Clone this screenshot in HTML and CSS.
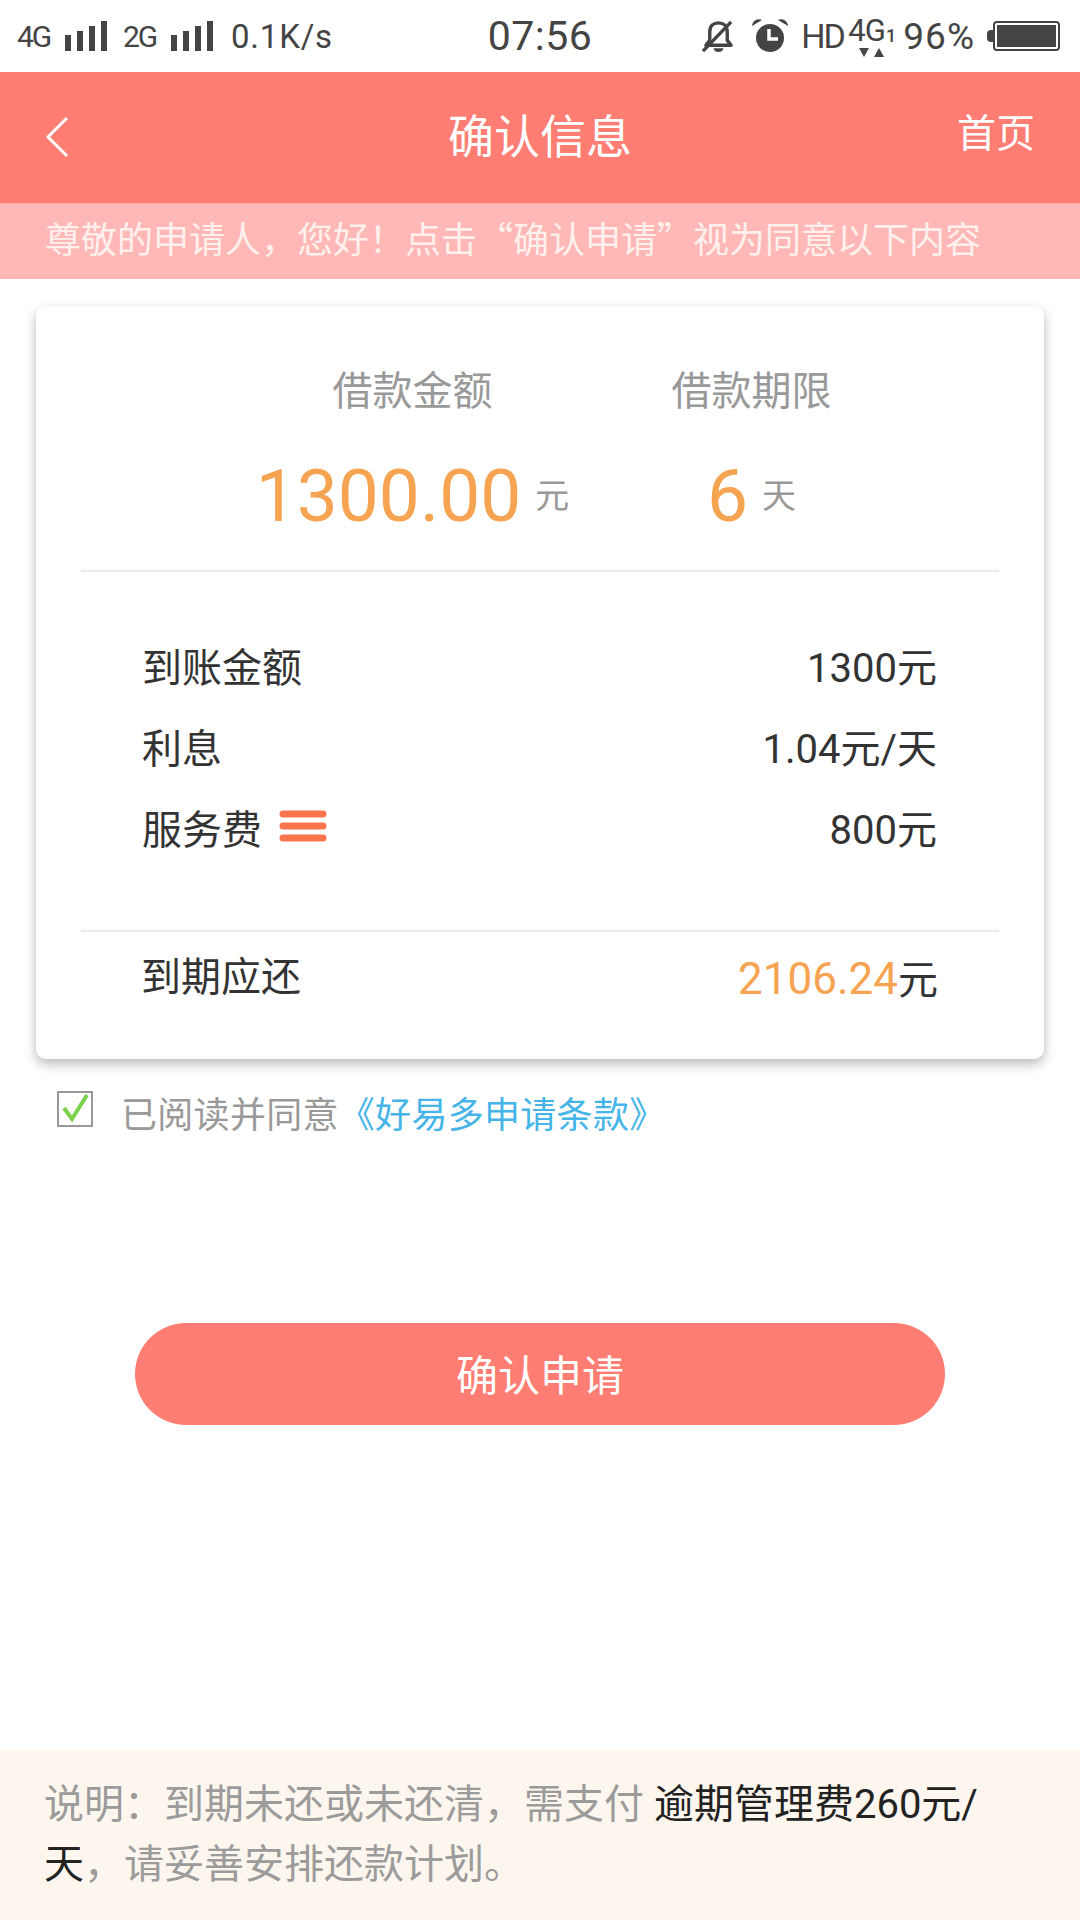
FILE: index.html
```html
<!DOCTYPE html>
<html lang="zh-CN">
<head>
<meta charset="utf-8">
<title>确认信息</title>
<link rel="stylesheet" href="styles.css">
</head>
<body>
<div class="page">
  <div class="status">
    <div class="st-left">
      <span class="net">4G</span>
      <svg class="bars" viewBox="0 0 42 30"><path d="M0 14h6v16H0zM12 10h6v20h-6zM24 5h6v25h-6zM36 0h6v30h-6z"/></svg>
      <span class="net">2G</span>
      <svg class="bars" viewBox="0 0 42 30"><path d="M0 14h6v16H0zM12 10h6v20h-6zM24 5h6v25h-6zM36 0h6v30h-6z"/></svg>
      <span class="speed">0.1K/s</span>
    </div>
    <div class="st-time">07:56</div>
    <div class="st-right">
      <svg class="ic-bell" viewBox="0 0 36 36"><path d="M5 27l4-5V13C9 7 13 4 18 4s9 3 9 9v9l4 5z" fill="none" stroke="#444" stroke-width="3.500" stroke-linejoin="round"/><path d="M13 30h10a5 4 0 0 1-10 0z" fill="#444"/><path d="M2 33L31 3" stroke="#444" stroke-width="3.500"/></svg>
      <svg class="ic-alarm" viewBox="0 0 36 36"><circle cx="18" cy="20" r="14" fill="#444"/><path d="M17 11v10h9" fill="none" stroke="#fff" stroke-width="3.500"/><path d="M0 8a7 7 0 0 1 10-6zM36 8a7 7 0 0 0-10-6z" fill="#444"/></svg>
      <span class="hd">HD</span>
      <span class="sig"><span class="sig-4g">4G</span><span class="sig-1">1</span><svg class="sig-arrows" viewBox="0 0 26 9"><path d="M0 0h10L5 9zM15 9h10L20 0z"/></svg></span>
      <span class="pct">96%</span>
      <span class="bat"><span class="bat-cap"></span><span class="bat-body"><span class="bat-fill"></span></span></span>
    </div>
  </div>

  <header class="head">
    <svg class="back" viewBox="0 0 24 42"><path d="M22 2L3 21l19 19" fill="none" stroke="#fff" stroke-width="3"/></svg>
    <h1 class="title">确认信息</h1>
    <span class="home">首页</span>
  </header>
  <div class="notice">尊敬的申请人，您好！点击“确认申请”视为同意以下内容</div>

  <section class="card">
    <div class="summary">
      <div class="sum-col">
        <div class="sum-label">借款金额</div>
        <div class="sum-val"><span class="big">1300.00</span><span class="unit">元</span></div>
      </div>
      <div class="sum-col">
        <div class="sum-label">借款期限</div>
        <div class="sum-val"><span class="big">6</span><span class="unit">天</span></div>
      </div>
    </div>
    <div class="rows">
      <div class="row"><span>到账金额</span><span>1300元</span></div>
      <div class="row"><span>利息</span><span>1.04元/天</span></div>
      <div class="row"><span class="fee">服务费<svg class="menu" viewBox="0 0 48 32"><path d="M4 4h40M4 16h40M4 28h40" stroke="#f8754e" stroke-width="7" stroke-linecap="round"/></svg></span><span>800元</span></div>
    </div>
    <div class="total"><span class="total-label">到期应还</span><span><span class="orange">2106.24</span>元</span></div>
  </section>

  <div class="agree">
    <svg class="check" viewBox="0 0 36 36"><rect x="1" y="1" width="34" height="34" fill="#fff" stroke="#999" stroke-width="2"/><path d="M7 17l8 11L30 4" fill="none" stroke="#79d24a" stroke-width="4"/></svg>
    <span class="agree-text">已阅读并同意<a class="link">《好易多申请条款》</a></span>
  </div>

  <div class="btn-wrap"><button class="btn">确认申请</button></div>

  <footer class="foot"><span class="grey">说明：到期未还或未还清，需支付 </span><span class="dark">逾期管理费260元/</span><span class="dark">天</span><span class="grey">，请妥善安排还款计划。</span></footer>
</div>
</body>
</html>
```
FILE: styles.css
```css
* { box-sizing: border-box; }
html, body { margin: 0; padding: 0; }
body { font-family: "Roboto", "Noto Sans CJK SC", sans-serif; background: #fff; color: #333; }
.page { width: 1080px; height: 1920px; display: flex; flex-direction: column; overflow: hidden; background: #fff; }

.status { height: 72px; display: flex; align-items: center; justify-content: space-between; padding: 0 20px 0 17px; position: relative; color: #444; }
.st-left { display: flex; align-items: center; }
.net { font-size: 30px; letter-spacing: -2px; width: 48px; }
.bars { width: 42px; height: 30px; fill: #444; margin-right: 16px; }
.speed { font-size: 33px; margin-left: 2px; letter-spacing: .8px; }
.st-time { position: absolute; left: 0; right: 0; text-align: center; font-size: 41px; line-height: 74px; letter-spacing: .5px; }
.st-right { display: flex; align-items: center; }
.ic-bell { width: 35px; height: 35px; margin-right: 16px; }
.ic-alarm { width: 36px; height: 36px; margin-right: 13px; }
.hd { font-size: 34px; letter-spacing: -2px; width: 45px; margin-right: 2px; }
.sig { position: relative; width: 48px; height: 44px; display: block; }
.sig-4g { position: absolute; left: 0; top: 0; font-size: 31px; line-height: 34px; letter-spacing: -1px; }
.sig-1 { position: absolute; right: 0; top: 12px; font-size: 18px; line-height: 20px; font-weight: 500; }
.sig-arrows { position: absolute; left: 11px; top: 34px; width: 26px; height: 9px; fill: #444; }
.pct { font-size: 37px; margin-left: 7px; letter-spacing: 1px; }
.bat { display: flex; align-items: center; margin-left: 12px; }
.bat-cap { width: 6px; height: 12px; background: #444; border-radius: 4px 0 0 4px; }
.bat-body { width: 67px; height: 30px; border: 2px solid #444; border-radius: 4px; padding: 2px; display: block; }
.bat-fill { display: block; width: 100%; height: 100%; background: #444; }

.head { height: 131px; background: #ff7d72; display: flex; align-items: center; justify-content: space-between; padding: 0 45px; position: relative; color: #fff; }
.back { width: 24px; height: 42px; margin-top: -2px; }
.title { position: absolute; left: 0; right: 0; margin: 0; text-align: center; font-size: 46px; font-weight: 400; line-height: 131px; }
.home { font-size: 39px; margin-top: -16px; position: relative; }

.notice { height: 76px; background: #ffb8b6; border-top: 1px solid #f7a7a2; color: #fff0ee; font-family: "Noto Sans CJK SC", sans-serif; font-size: 36px; line-height: 66px; padding-left: 45px; white-space: nowrap; }

.card { margin: 27px 36px 0; height: 753px; background: #fff; border-radius: 10px; box-shadow: 0 5px 12px rgba(0,0,0,.28); padding: 0 45px; display: flex; flex-direction: column; }
.summary { height: 266px; border-bottom: 2px solid #ececec; display: grid; grid-template-columns: 339px 339px; padding-left: 162px; }
.sum-col { display: flex; flex-direction: column; align-items: center; }
.sum-label { font-size: 40px; line-height: 58px; margin-top: 57px; color: #999; white-space: nowrap; }
.sum-val { display: flex; align-items: center; color: #f6a352; height: 104px; margin-top: 23px; white-space: nowrap; }
.big { font-size: 73px; font-weight: 400; }
.unit { font-size: 34px; color: #999; margin: -6px 0 0 14px; }
.rows { height: 360px; border-bottom: 2px solid #ececec; padding: 52px 62px 0 61px; }
.row { display: flex; justify-content: space-between; align-items: center; height: 81px; font-size: 40px; color: #333; }
.fee { display: flex; align-items: center; }
.menu { width: 48px; height: 32px; margin-left: 17px; margin-top: -2px; }
.total { flex: 1; display: flex; justify-content: space-between; align-items: center; padding: 0 61px 38px 60px; font-size: 40px; color: #333; }
.total-label { margin-top: -6px; }
.orange { color: #f6a352; font-size: 44px; }

.agree { display: flex; align-items: center; margin: 30px 0 0 57px; height: 46px; }
.check { width: 36px; height: 36px; margin-top: -6px; }
.agree-text { font-size: 36px; letter-spacing: .3px; color: #999; margin-left: 28px; }
.link { color: #45b4e8; }

.btn-wrap { margin-top: 188px; padding-left: 135px; }
.btn { display: block; width: 810px; height: 102px; border: 0; border-radius: 51px; background: #ff7d72; color: #fff; font-size: 42px; font-family: inherit; padding: 0 0 4px; }

.foot { margin-top: auto; height: 170px; background: #fdf6ee; padding: 25px 90px 0 44px; font-size: 40px; line-height: 60px; }
.grey { color: #9b9b9b; }
.dark { color: #222; }
```
